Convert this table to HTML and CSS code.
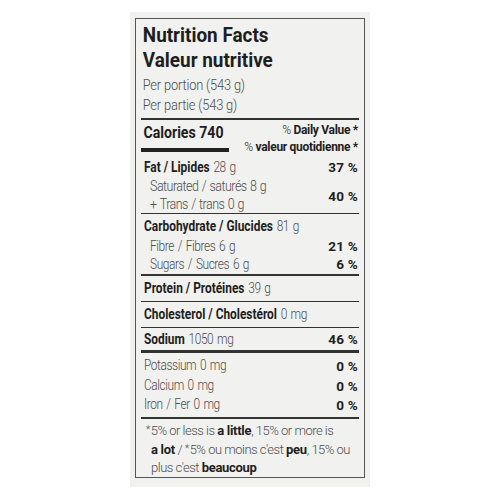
FILE: index.html
```html
<html>
<head>
    <title>Nutrition Facts</title>
    <link rel="stylesheet" href="styles.css">
</head>
<body>
    <div class="paper">
        <div class="label">
            <div class="title">Nutrition Facts</div>
            <div class="title">Valeur nutritive</div>
            <div class="serving first">Per portion (543 g)</div>
            <div class="serving">Per partie (543 g)</div>
            <div class="rule"></div>

            <div class="cal">
                <div class="cal-left">
                    <div class="cal-text">Calories 740</div>
                    <div class="cal-bar"></div>
                </div>
                <div class="dv">
                    <div><span class="lt">%</span> Daily Value *</div>
                    <div><span class="lt">%</span> valeur quotidienne *</div>
                </div>
            </div>

            <div class="row fat"><span class="name"><b>Fat / Lipides</b> 28 g</span><b class="pct">37 %</b></div>
            <div class="group">
                <div class="subs">
                    <div>Saturated / saturés 8 g</div>
                    <div>+ Trans / trans 0 g</div>
                </div>
                <b class="pct">40 %</b>
            </div>
            <div class="rule thin"></div>

            <div class="row carb"><span class="name"><b>Carbohydrate / Glucides</b> 81 g</span></div>
            <div class="row sub fibre"><span class="name">Fibre / Fibres 6 g</span><b class="pct">21 %</b></div>
            <div class="row sub sugar"><span class="name">Sugars / Sucres 6 g</span><b class="pct">6 %</b></div>
            <div class="rule flush"></div>

            <div class="row single"><span class="name"><b>Protein / Protéines</b> 39 g</span></div>
            <div class="rule thin"></div>
            <div class="row single"><span class="name"><b>Cholesterol / Cholestérol</b> 0 mg</span></div>
            <div class="rule thin"></div>
            <div class="row sodium"><span class="name"><b>Sodium</b> 1050 mg</span><b class="pct">46 %</b></div>
            <div class="rule thick"></div>

            <div class="row mineral top"><span class="name">Potassium 0 mg</span><b class="pct">0 %</b></div>
            <div class="row mineral"><span class="name">Calcium 0 mg</span><b class="pct">0 %</b></div>
            <div class="row mineral"><span class="name">Iron / Fer 0 mg</span><b class="pct">0 %</b></div>
            <div class="rule"></div>

            <div class="note">
                <span class="star">*</span>5% or less is <b>a little</b>, 15% or more is<br>
                <b>a lot</b> / <span class="star">*</span>5% ou moins c'est <b>peu</b>, 15% ou<br>
                plus c'est <b>beaucoup</b>
            </div>
        </div>
    </div>
</body>
</html>
```

FILE: styles.css
```css
body {
    margin: 0;
    background: #ffffff;
    font-family: Roboto, "Liberation Sans", Arial, sans-serif;
    font-weight: 300;
    color: #4e4e4e;
}

.paper {
    width: 240px; height: 475px;
    margin: 12px auto 0;
    padding: 6px 5px;
    box-sizing: border-box;
    background: #f1f1ef;
}

.label {
    height: 460px;
    box-sizing: border-box;
    border: 1px solid #555;
    padding: 4px 5px 0;
    white-space: nowrap;
}

b { color: #1e1e1e; font-weight: bold; }

/* no condensed face installed: squeeze the label copy sideways */
.title, .serving, .cal-text, .subs div {
    transform: scaleX(0.86);
    transform-origin: 0 0;
}
.name {
    display: inline-block;
    font-size: 14.5px; letter-spacing: -0.5px; word-spacing: 1.5px;
    transform: scaleX(0.82);
    transform-origin: 0 0;
}
.name b { letter-spacing: 0; word-spacing: 0; }

.title {
    font-size: 21px; font-weight: bold; line-height: 25px;
    padding-left: 2px; color: #1e1e1e; transform: scaleX(0.9);
}

.serving {
    font-size: 15.5px; line-height: 20px; padding-left: 2px;
    letter-spacing: -0.2px; transform: scaleX(0.83);
}
.serving.first { margin-top: 2px; }

.rule { height: 2px; background: #333; margin-top: 3px; }
.rule.flush { margin-top: 0; }
.rule.thin { height: 1px; margin-top: 0; }
.rule.thick { height: 3px; margin-top: 0; }

.cal {
    display: flex; justify-content: space-between;
    padding-top: 2px;
}
.cal-text {
    font-size: 17px; font-weight: bold; line-height: 20px;
    color: #1e1e1e; padding-left: 3px; transform: scaleX(0.83);
}
.cal-bar {
    width: 88px; height: 4px; background: #222; margin-top: 6px;
}
.dv {
    text-align: right; font-size: 12px; font-weight: bold;
    line-height: 17px; color: #1e1e1e; padding-right: 1px;
    letter-spacing: -0.3px;
}
.lt { font-weight: 300; }

.row {
    display: flex; justify-content: space-between; align-items: center;
    font-size: 13px; padding: 0 1px 0 3px;
}
.pct { font-size: 13.5px; letter-spacing: 0.2px; }

.fat { height: 22px; }

.group {
    display: flex; justify-content: space-between; align-items: center;
    padding: 0 1px 0 9px; font-size: 14.5px;
}
.subs div { line-height: 17.5px; letter-spacing: -0.6px; word-spacing: 1px; }

.carb { height: 24px; }
.row.sub { padding-left: 9px; }
.fibre { height: 16px; }
.sugar { height: 20px; }

.single { height: 25px; }
.sodium { height: 22px; }

.mineral { height: 19px; }
.mineral.top { height: 23px; padding-top: 2px; box-sizing: border-box; }

.note {
    font-size: 13px; line-height: 18px; letter-spacing: -0.5px;
    padding: 2px 0 0 10px; text-indent: -5px;
}
.note b { letter-spacing: -0.3px; }
.star { font-size: 10px; vertical-align: 2px; margin-right: 1px; }
```
